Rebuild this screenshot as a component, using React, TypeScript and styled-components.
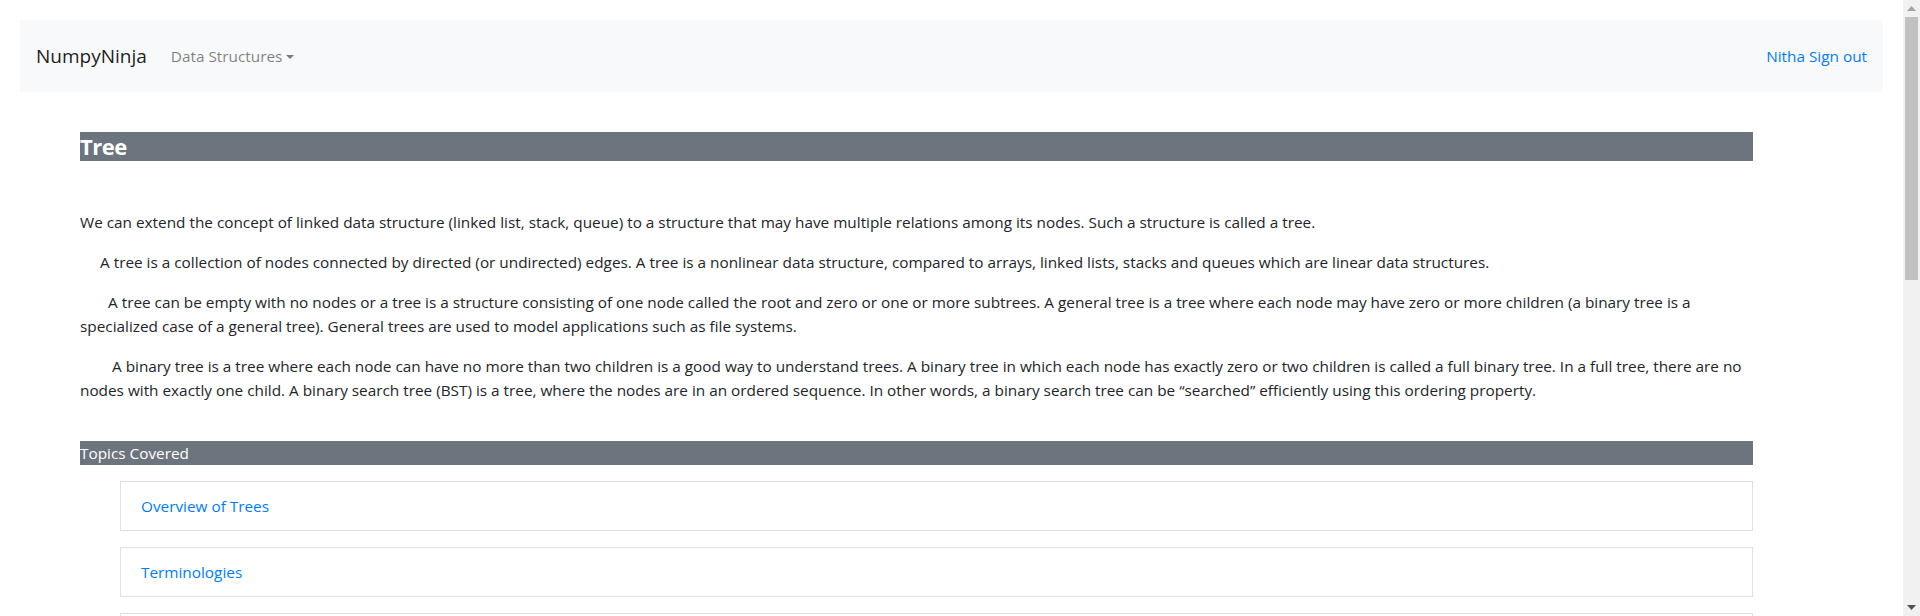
import React from "react";
import styled, { createGlobalStyle } from "styled-components";

const GlobalStyle = createGlobalStyle`
  html { scrollbar-width: none; }
  html::-webkit-scrollbar { display: none; }
  body {
    margin: 0;
    font-family: "Open Sans", "Noto Sans", sans-serif;
    font-size: 15.33px;
    line-height: 24px;
    color: #212529;
    background: #fff;
  }
  * { box-sizing: border-box; }
`;

const Page = styled.div`
  margin-right: 17px;
  padding-top: 20px;
  padding-bottom: 40px;
`;

const Navbar = styled.nav`
  margin: 0 20px;
  height: 72px;
  background: #f8f9fa;
  display: flex;
  align-items: center;
  padding: 0 16px;
`;

const Brand = styled.a`
  font-size: 19px;
  line-height: 30px;
  color: rgba(0, 0, 0, 0.9);
  margin-right: 16px;
  text-decoration: none;
`;

const NavLink = styled.a<{ $blue?: boolean }>`
  padding: 0 8px;
  line-height: 24px;
  color: ${(p) => (p.$blue ? "#007bff" : "rgba(0,0,0,0.5)")};
  text-decoration: none;
  display: inline-flex;
  align-items: center;
`;

const Caret = styled.span`
  display: inline-block;
  margin-left: 4px;
  margin-top: 1px;
  border-top: 4.8px solid currentColor;
  border-left: 4.8px solid transparent;
  border-right: 4.8px solid transparent;
`;

const Spacer = styled.div`
  flex: 1;
`;

const RightLink = styled(NavLink)`
  padding-right: 0;
`;

const Content = styled.main`
  padding: 40px 150px 0 80px;
`;

const Heading = styled.h4`
  margin: 0 0 49px;
  background: #6c757d;
  color: #fff;
  font-size: 22px;
  letter-spacing: -0.5px;
  font-weight: 700;
  line-height: 29px;
`;

const Para = styled.p<{ $indent: number }>`
  margin: 0 0 16px;
  text-indent: ${(p) => p.$indent}px;
`;

const SubHeading = styled.div`
  margin-top: 39px;
  background: #6c757d;
  color: #fff;
  line-height: 24px;
`;

const TopicList = styled.ul`
  list-style: none;
  margin: 16px 0 0;
  padding: 0 0 0 40px;
  display: flex;
  flex-direction: column;
  gap: 16px;
`;

const TopicItem = styled.li`
  border: 1px solid #dfdfdf;
  padding: 12px 20px;
  line-height: 24px;
`;

const TopicLink = styled.a`
  color: #007bff;
  text-decoration: none;
`;

const ScrollTrack = styled.div`
  position: fixed;
  top: 0;
  right: 0;
  width: 17px;
  height: 100vh;
  background: #f1f1f1;
  display: flex;
  flex-direction: column;
  align-items: center;
`;

const ArrowBox = styled.div`
  height: 17px;
  width: 17px;
  display: flex;
  align-items: center;
  justify-content: center;
`;

const Thumb = styled.div`
  width: 13px;
  height: 263px;
  background: #c1c1c1;
`;

const TrackFill = styled.div`
  flex: 1;
`;

const paragraphs = [
  {
    indent: 0,
    text: "We can extend the concept of linked data structure (linked list, stack, queue) to a structure that may have multiple relations among its nodes. Such a structure is called a tree.",
  },
  {
    indent: 20,
    text: "A tree is a collection of nodes connected by directed (or undirected) edges. A tree is a nonlinear data structure, compared to arrays, linked lists, stacks and queues which are linear data structures.",
  },
  {
    indent: 28,
    text: "A tree can be empty with no nodes or a tree is a structure consisting of one node called the root and zero or one or more subtrees. A general tree is a tree where each node may have zero or more children (a binary tree is a specialized case of a general tree). General trees are used to model applications such as file systems.",
  },
  {
    indent: 32,
    text: "A binary tree is a tree where each node can have no more than two children is a good way to understand trees. A binary tree in which each node has exactly zero or two children is called a full binary tree. In a full tree, there are no nodes with exactly one child. A binary search tree (BST) is a tree, where the nodes are in an ordered sequence. In other words, a binary search tree can be \u201csearched\u201d efficiently using this ordering property.",
  },
];

const topics = [
  "Overview of Trees",
  "Terminologies",
  "Types of Trees",
  "Tree Traversals",
  "Traversals-Illustration",
  "Binary Trees",
  "Types of Binary Trees",
  "Implementation in Python",
  "Binary Tree Traversals",
  "Implementation of Binary Trees",
  "Applications of Binary trees",
  "Binary Search Trees",
  "Implementation Of BST",
];

export default function App() {
  return (
    <>
      <GlobalStyle />
      <Page>
        <Navbar>
          <Brand href="#">NumpyNinja</Brand>
          <NavLink href="#">
            Data Structures
            <Caret />
          </NavLink>
          <Spacer />
          <RightLink $blue href="#">
            Nitha Sign out
          </RightLink>
        </Navbar>
        <Content>
          <Heading>Tree</Heading>
          {paragraphs.map((p, i) => (
            <Para key={i} $indent={p.indent}>
              {p.text}
            </Para>
          ))}
          <SubHeading>Topics Covered</SubHeading>
          <TopicList>
            {topics.map((t) => (
              <TopicItem key={t}>
                <TopicLink href="#">{t}</TopicLink>
              </TopicItem>
            ))}
          </TopicList>
        </Content>
      </Page>
      <ScrollTrack>
        <ArrowBox>
          <svg width="9" height="5" viewBox="0 0 9 5">
            <path d="M0 5 L4.5 0 L9 5 Z" fill="#a3a3a3" />
          </svg>
        </ArrowBox>
        <Thumb />
        <TrackFill />
        <ArrowBox>
          <svg width="9" height="5" viewBox="0 0 9 5">
            <path d="M0 0 L4.5 5 L9 0 Z" fill="#505050" />
          </svg>
        </ArrowBox>
      </ScrollTrack>
    </>
  );
}
